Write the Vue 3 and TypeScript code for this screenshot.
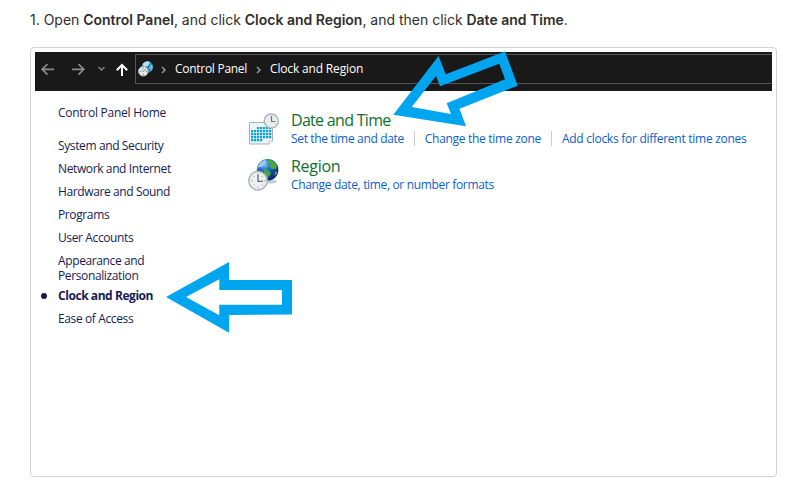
<script setup lang="ts">
interface Category {
  label: string
  active?: boolean
  tall?: boolean
}

const categories: Category[] = [
  { label: 'System and Security' },
  { label: 'Network and Internet' },
  { label: 'Hardware and Sound' },
  { label: 'Programs' },
  { label: 'User Accounts' },
  { label: 'Appearance and Personalization', tall: true },
  { label: 'Clock and Region', active: true },
  { label: 'Ease of Access' },
]

const timeTasks: string[] = ['Set the time and date', 'Change the time zone', 'Add clocks for different time zones']
const calendarRows: number[] = [0, 1, 2, 3, 4]
const calendarCols: number[] = [0, 1, 2, 3, 4, 5, 6]
</script>

<template>
  <main class="page">
    <p class="step">1. Open <b>Control Panel</b>, and click <b>Clock and Region</b>, and then click <b>Date and Time</b>.</p>

    <section class="frame">
      <header class="toolbar">
        <svg class="nav" width="100" height="39" viewBox="0 0 100 39" fill="none">
          <path d="M7.5 17.3H19M12.5 12L7.2 17.3L12.5 22.6" stroke="#8c8c8c" stroke-width="1.7" />
          <path d="M37 17.3H48.5M43.5 12L48.8 17.3L43.5 22.6" stroke="#8c8c8c" stroke-width="1.7" />
          <path d="M63.5 15L66.5 18L69.5 15" stroke="#777" stroke-width="1.7" />
          <path d="M87 24V13M81.8 18.2L87 13L92.2 18.2" stroke="#fff" stroke-width="2" />
        </svg>
        <div class="address">
          <svg class="mini" width="16" height="16" viewBox="0 0 16 16">
            <circle cx="9.5" cy="6" r="5.8" fill="#2386b4" />
            <path d="M4.5 3Q8-1 12 1L10 5L6 6Z" fill="#b8e0ed" />
            <path d="M13 3L15 6L13 10L11 7Z" fill="#77bad2" />
            <circle cx="5.3" cy="10.3" r="4.8" fill="#e8ecec" stroke="#a4abad" />
            <path d="M5.3 10.5L8 8M5.3 10.5L3.5 9M5.3 6.8V8M5.3 12.8V14M2 10.5H3M8 10.5H9" stroke="#56646c" stroke-width=".8" />
          </svg>
          <svg class="chev" width="6" height="8" viewBox="0 0 6 8"><path d="M1 1L4 4L1 7" fill="none" stroke="#a0a0a0" stroke-width="1.4" /></svg>
          <span class="crumb first">Control Panel</span>
          <svg class="chev" width="6" height="8" viewBox="0 0 6 8"><path d="M1 1L4 4L1 7" fill="none" stroke="#a0a0a0" stroke-width="1.4" /></svg>
          <span class="crumb">Clock and Region</span>
        </div>
      </header>

      <div class="body">
        <nav class="side">
          <a class="home">Control Panel Home</a>
          <a v-for="item in categories" :key="item.label" class="item" :class="{ active: item.active, tall: item.tall }">{{ item.label }}</a>
        </nav>

        <div class="content">
          <article class="group">
            <svg class="icon" width="34" height="34" viewBox="0 0 34 34">
              <path d="M2.5 11.5H25.5V30L22 33H3L2.5 32Z" fill="#eef5f8" stroke="#a5afb6" />
              <path d="M25.5 30H22V33" fill="#fff" stroke="#b0b6ba" stroke-width=".7" />
              <g fill="#12a3c5">
                <template v-for="r in calendarRows" :key="r">
                  <template v-for="c in calendarCols" :key="c">
                    <rect v-if="!(r === 0 && c < 2) && !(r === 4 && c > 3)" :x="4 + c * 3" :y="16 + r * 3" width="2.3" height="2.3" />
                  </template>
                </template>
              </g>
              <circle cx="24.3" cy="10" r="7" fill="#e8edef" stroke="#aeb5b9" stroke-width="1.4" />
              <path d="M24.5 5V10.5H28.5" fill="none" stroke="#657985" stroke-width="1.2" />
            </svg>
            <div>
              <h2 class="date">Date and Time</h2>
              <div class="tasks"><a v-for="task in timeTasks" :key="task">{{ task }}</a></div>
            </div>
          </article>

          <article class="group">
            <svg class="icon" width="34" height="34" viewBox="0 0 34 34">
              <defs>
                <radialGradient id="sea" cx="35%" cy="25%" r="75%"><stop stop-color="#82c9f5" /><stop offset=".38" stop-color="#226ed0" /><stop offset="1" stop-color="#08256f" /></radialGradient>
              </defs>
              <ellipse cx="22" cy="24.5" rx="8" ry="2" fill="#c5cbd0" />
              <circle cx="20.6" cy="12.8" r="10.8" fill="url(#sea)" />
              <path d="M11 9L14 5L18 3L20 5L17 7L15 10L12 10L10.5 13Z" fill="#9ccdf0" />
              <path d="M21 2.5Q27 3 30 9L29 12L25 12L22 9L24 7L20 5Z" fill="#4aaa35" />
              <path d="M17 11L22 14L24 17L21 20L20 23L17 18Z" fill="#4aa345" />
              <path d="M29 14L30 16L27 19Z" fill="#8fcb45" />
              <circle cx="11" cy="23.8" r="9.2" fill="#edf0f1" stroke="#aeb5ba" stroke-width="1.5" />
              <path d="M11 17.2V24.3H15.8" fill="none" stroke="#536c7d" stroke-width="1.3" />
              <path d="M4.1 23.7H5.8M11 29.4V31M16.6 23.7H18.3M6.3 18.9L7.3 19.9M15.8 18.9L14.8 19.9M6.3 28.4L7.3 27.4M15.8 28.4L14.8 27.4" stroke="#8d979d" stroke-width=".9" />
            </svg>
            <div>
              <h2>Region</h2>
              <div class="tasks"><a>Change date, time, or number formats</a></div>
            </div>
          </article>
        </div>
      </div>
    </section>

    <svg class="pointers" width="800" height="499" viewBox="0 0 800 499" fill="#00a5ef" fill-rule="evenodd">
      <path d="M393.3 114.7L438.5 56L445.7 74.3L505 51.5L517.7 85.7L459.5 108.7L466 126.3ZM411.7 107L436 76L440 86.3L499.3 63.7L505 79.3L446.7 103.3L451 114Z" />
      <path d="M166 297L229 262V280H292V314.6L229 315V332.7ZM186 297L219.3 315.3V304.7H282V290H219.3V279.3Z" />
    </svg>
  </main>
</template>

<style>
body { margin: 0; background: #fff; }
</style>

<style scoped>
.page { position: relative; box-sizing: border-box; width: 800px; height: 499px; padding: 10px 23px 0 30px; overflow: hidden; font-family: "Open Sans", "Noto Sans", sans-serif; }
.step { margin: 0 0 17px; height: 20px; font: 14px/20px Inter, sans-serif; letter-spacing: -.01px; color: #302e2d; white-space: nowrap; }
.step b { font-weight: 600; }
.frame { box-sizing: border-box; width: 747px; height: 430px; padding: 4px; border: 1px solid #d3d3d3; border-radius: 4px; }
.toolbar { display: flex; height: 39px; background: #191919; }
.nav { display: block; }
.address { box-sizing: border-box; display: flex; align-items: center; width: 637px; height: 30px; margin-top: 2px; padding: 0 0 1px 2px; border: 1px solid #555; border-right: 0; color: #fff; font-size: 12px; line-height: 17px; }
.chev { margin: 2px 8px 0; }
.mini + .chev { margin-left: 7px; }
.crumb { white-space: nowrap; letter-spacing: -.16px; }
.first { width: 73px; letter-spacing: -.28px; }
.body { display: flex; }
.side { display: flex; flex-direction: column; box-sizing: border-box; width: 212px; padding: 14px 0 0 23px; }
.side a { font-size: 12px; line-height: 15px; letter-spacing: -.38px; color: #151c55; }
.side .home { margin-bottom: 18px; letter-spacing: -.26px; }
.side .item { width: 120px; margin-bottom: 8px; }
.side .tall { margin-bottom: 5px; }
.side .active { display: flex; align-items: center; width: 140px; margin-left: -17px; font-weight: 700; letter-spacing: -.44px; }
.active::before { content: ""; width: 6px; height: 6px; margin-right: 11px; border-radius: 50%; background: #151c55; }
.content { padding-top: 19px; }
.group { display: flex; height: 46px; }
.icon { flex: none; width: 34px; height: 34px; margin: 1px 10px 0 0; }
h2 { margin: 0; font-size: 16px; line-height: 20px; font-weight: 400; letter-spacing: -.28px; color: #0d702b; white-space: nowrap; }
.date { letter-spacing: -.7px; }
.tasks { display: flex; margin-top: 1px; font-size: 12px; line-height: 15px; letter-spacing: -.34px; color: #0b61cb; white-space: nowrap; }
.tasks a + a { margin-left: 10px; padding-left: 10px; border-left: 1px solid #ccc; }
.tasks a:nth-child(2) { letter-spacing: -.3px; }
.tasks a:nth-child(3) { letter-spacing: -.27px; }
.pointers { position: absolute; left: 0; top: 0; pointer-events: none; }
</style>
